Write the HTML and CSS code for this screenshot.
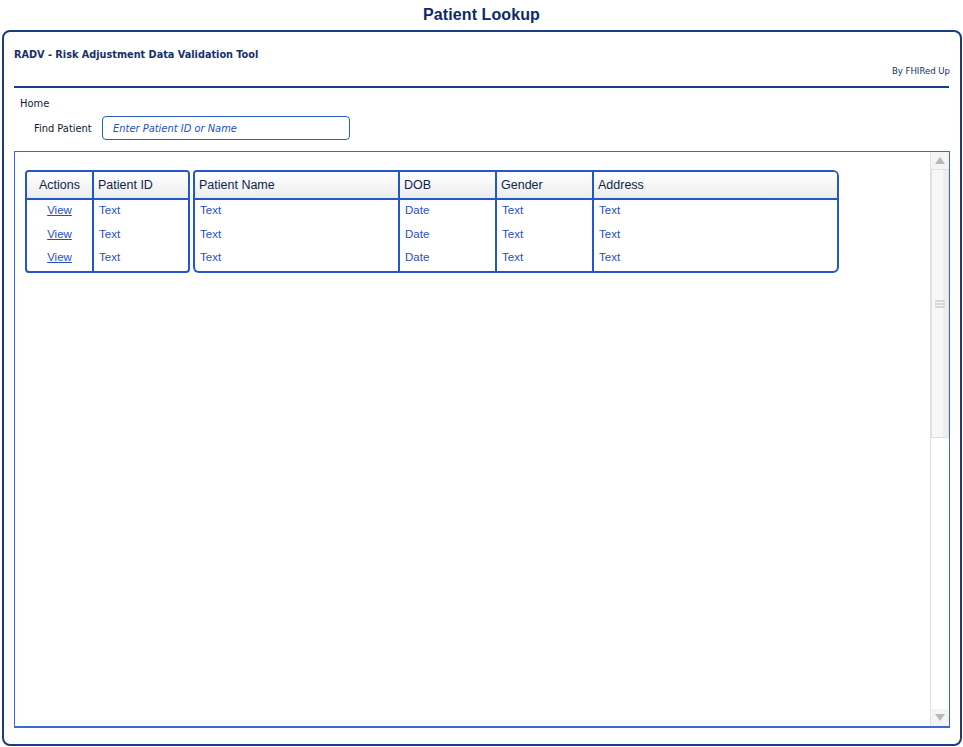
FILE: index.html
```html
<!DOCTYPE html>
<html>
<head>
<meta charset="utf-8">
<link rel="stylesheet" href="styles.css">
</head>
<body>
<h1 class="title">Patient Lookup</h1>
<div class="frame">
  <div class="topbar">
    <div class="app-name">RADV - Risk Adjustment Data Validation Tool</div>
    <div class="by">By FHIRed Up</div>
  </div>
  <div class="rule"></div>
  <div class="crumb">Home</div>
  <div class="find">
    <span class="find-label">Find Patient</span>
    <div class="input">Enter Patient ID or Name</div>
  </div>
  <div class="panel">
    <div class="panel-body">
      <div class="table">
        <div class="group g1">
          <div class="col c-actions">
            <div class="th center">Actions</div>
            <div class="td center"><a>View</a></div>
            <div class="td center"><a>View</a></div>
            <div class="td center"><a>View</a></div>
          </div>
          <div class="col c-id">
            <div class="th">Patient ID</div>
            <div class="td">Text</div>
            <div class="td">Text</div>
            <div class="td">Text</div>
          </div>
        </div>
        <div class="group g2">
          <div class="col c-name">
            <div class="th">Patient Name</div>
            <div class="td">Text</div>
            <div class="td">Text</div>
            <div class="td">Text</div>
          </div>
        </div>
        <div class="group g3">
          <div class="col c-dob">
            <div class="th">DOB</div>
            <div class="td">Date</div>
            <div class="td">Date</div>
            <div class="td">Date</div>
          </div>
          <div class="col c-gender">
            <div class="th">Gender</div>
            <div class="td">Text</div>
            <div class="td">Text</div>
            <div class="td">Text</div>
          </div>
          <div class="col c-addr">
            <div class="th">Address</div>
            <div class="td">Text</div>
            <div class="td">Text</div>
            <div class="td">Text</div>
          </div>
        </div>
      </div>
    </div>
    <div class="scrollbar">
      <div class="sb-btn"><span class="arrow-up"></span></div>
      <div class="sb-track">
        <div class="sb-thumb"><span></span><span></span><span></span></div>
      </div>
      <div class="sb-rest"></div>
      <div class="sb-btn"><span class="arrow-down"></span></div>
    </div>
  </div>
</div>
</body>
</html>
```
FILE: styles.css
```css
* { box-sizing: border-box; }
html, body { margin: 0; padding: 0; background: #fff; }
body {
  width: 963px;
  height: 747px;
  font-family: "Liberation Sans", Arial, sans-serif;
  color: #0f2a66;
  overflow: hidden;
}
.title {
  margin: 0;
  height: 30px;
  padding-top: 6px;
  text-align: center;
  font-size: 16px;
  font-weight: bold;
  color: #0d2a6a;
  letter-spacing: 0.1px;
}
.frame {
  margin-left: 2px;
  width: 960px;
  height: 716px;
  border: 2px solid #1a3c80;
  border-radius: 8px;
  padding: 16px 10px 0 10px;
  display: flex;
  flex-direction: column;
}
.topbar {
  display: flex;
  justify-content: space-between;
  align-items: flex-start;
  height: 38px;
}
.app-name {
  font-family: "DejaVu Sans Condensed", "DejaVu Sans", sans-serif;
  font-size: 10.8px;
  font-weight: bold;
  color: #163068;
}
.by {
  font-family: "DejaVu Sans Condensed", "DejaVu Sans", sans-serif;
  font-size: 9.5px;
  color: #163068;
  margin-top: 17px;
}
.rule {
  height: 2px;
  background: #1a3c80;
  margin-right: 1px;
}
.crumb {
  font-family: "DejaVu Sans Condensed", "DejaVu Sans", sans-serif;
  font-size: 11px;
  padding-left: 6px;
  margin-top: 9px;
  color: #111a33;
}
.find {
  display: flex;
  align-items: center;
  margin-top: 6px;
  padding-left: 20px;
}
.find-label {
  font-family: "DejaVu Sans Condensed", "DejaVu Sans", sans-serif;
  font-size: 11px;
  color: #111a33;
  width: 68px;
}
.input {
  width: 248px;
  height: 24px;
  border: 1px solid #2a5cc4;
  border-radius: 4px;
  padding-left: 10px;
  display: flex;
  align-items: center;
  font-family: "DejaVu Sans Condensed", "DejaVu Sans", sans-serif;
  font-size: 11px;
  font-style: italic;
  color: #1f4fc2;
}
.panel {
  margin-top: 11px;
  width: 936px;
  height: 577px;
  border: 1px solid #3a6ad0;
  border-bottom: 2px solid #3a6ad0;
  display: flex;
}
.panel-body {
  flex: 1;
  padding: 18px 0 0 10px;
}
.table {
  display: flex;
  font-family: "Liberation Sans", Arial, sans-serif;
}
.group {
  display: flex;
  border: 2px solid #2356c8;
  border-radius: 4px;
  overflow: hidden;
}
.g1 { margin-right: 3px; }
.g2 { border-right: none; border-radius: 4px 0 0 6px; }
.g3 { border-radius: 0 6px 6px 0; }
.col { display: flex; flex-direction: column; }
.col + .col { border-left: 2px solid #2356c8; }
.c-actions { width: 65px; }
.c-id { width: 96px; }
.c-name { width: 203px; }
.c-dob { width: 95px; }
.c-gender { width: 97px; }
.c-addr { width: 245px; }
.th {
  height: 28px;
  border-bottom: 2px solid #2356c8;
  background: linear-gradient(#ffffff, #ececec);
  font-size: 12.5px;
  color: #0f1f4a;
  display: flex;
  align-items: center;
  padding-left: 4px;
}
.td {
  height: 23.5px;
  font-size: 11.5px;
  color: #1f4fc2;
  padding-left: 5px;
  padding-bottom: 3px;
  display: flex;
  align-items: center;
}
.center { justify-content: center; padding-left: 0; }
.td a { color: #1f4fc2; text-decoration: underline; }
.scrollbar {
  width: 19px;
  display: flex;
  flex-direction: column;
  border-left: 1px solid #e2e2e2;
  background: #fff;
}
.sb-btn {
  height: 17px;
  display: flex;
  align-items: center;
  justify-content: center;
  background: #f4f4f4;
}
.arrow-up {
  width: 0; height: 0;
  border-left: 5px solid transparent;
  border-right: 5px solid transparent;
  border-bottom: 7px solid #b8b8b8;
}
.arrow-down {
  width: 0; height: 0;
  border-left: 5px solid transparent;
  border-right: 5px solid transparent;
  border-top: 7px solid #b8b8b8;
}
.sb-track {
  height: 269px;
  border: 1px solid #e0e0e0;
  background: linear-gradient(90deg, #f7f7f7 70%, #eeeeee 70%);
  display: flex;
  flex-direction: column;
  align-items: center;
  justify-content: center;
}
.sb-thumb {
  display: flex;
  flex-direction: column;
  gap: 1px;
}
.sb-thumb span {
  display: block;
  width: 10px;
  height: 2px;
  background: #d6d6d6;
}
.sb-rest { flex: 1; }
```
